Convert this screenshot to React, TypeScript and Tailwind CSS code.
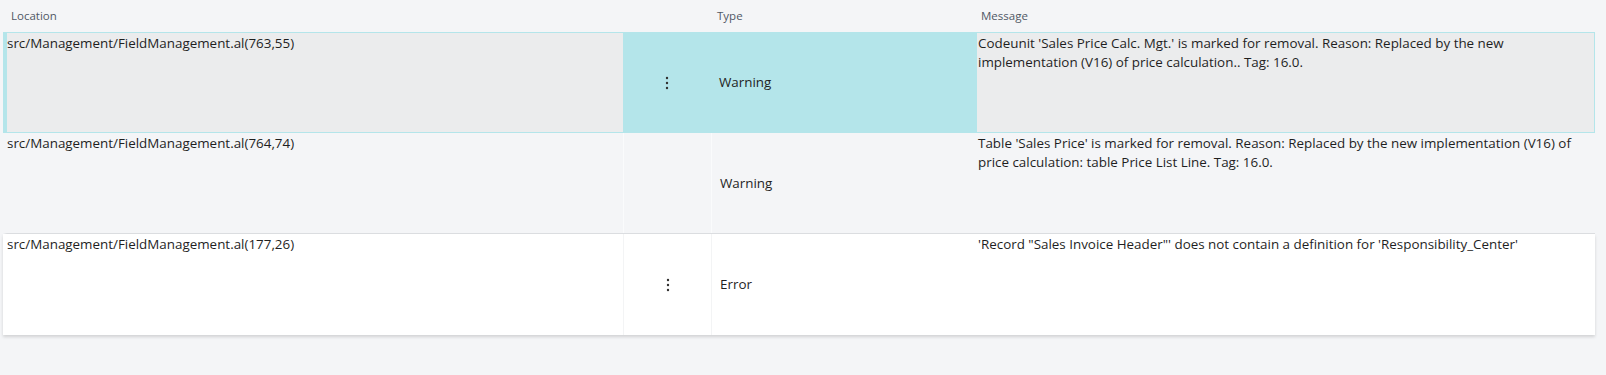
import { Fragment } from 'react'

type Row = {
  location: string
  type: string
  message: string[]
  tone: 'selected' | 'muted' | 'white'
  menu: boolean
}

const rows: Row[] = [
  {
    location: 'src/Management/FieldManagement.al(763,55)',
    type: 'Warning',
    message: [
      "Codeunit 'Sales Price Calc. Mgt.' is marked for removal. Reason: Replaced by the new",
      'implementation (V16) of price calculation.. Tag: 16.0.',
    ],
    tone: 'selected',
    menu: true,
  },
  {
    location: 'src/Management/FieldManagement.al(764,74)',
    type: 'Warning',
    message: [
      "Table 'Sales Price' is marked for removal. Reason: Replaced by the new implementation (V16) of",
      'price calculation: table Price List Line. Tag: 16.0.',
    ],
    tone: 'muted',
    menu: false,
  },
  {
    location: 'src/Management/FieldManagement.al(177,26)',
    type: 'Error',
    message: ['\'Record "Sales Invoice Header"\' does not contain a definition for \'Responsibility_Center\''],
    tone: 'white',
    menu: true,
  },
]

function MoreIcon() {
  return (
    <svg width="4" height="14" viewBox="0 0 4 14" className="text-[#323130]">
      <circle cx="2" cy="2" r="1.2" fill="currentColor" />
      <circle cx="2" cy="7" r="1.2" fill="currentColor" />
      <circle cx="2" cy="12" r="1.2" fill="currentColor" />
    </svg>
  )
}

const rowTone = {
  selected: 'border-[#b4e5ea] border-t border-r border-b bg-[#ebeced]',
  muted: 'border-l-[#f4f5f7] border-b border-b-[#dcdee1] bg-[#f4f5f7]',
  white: 'border-l-white bg-white shadow-[0_2px_3px_rgba(0,0,0,0.14)]',
}

const divider = {
  selected: 'bg-[#b4e5ea]',
  muted: 'border-l border-[#fafbfc]',
  white: 'border-l border-[#f3f4f5]',
}

export default function App() {
  return (
    <div className="min-h-[375px] w-full bg-[#f4f5f7] font-['Open_Sans','Noto_Sans',sans-serif] text-[#1f1f1f]">
      <div className="mx-[3px] w-[1592px]">
        <div className="grid h-[32px] grid-cols-[620px_88px_266px_1fr] items-center text-[11.5px] text-[#505865]">
          <span className="pl-[8px]">Location</span>
          <span />
          <span className="pl-[6px]">Type</span>
          <span className="pl-[4px]">Message</span>
        </div>
        {rows.map((row) => (
          <div
            key={row.location}
            className={`grid h-[101px] grid-cols-[616px_88px_266px_1fr] border-l-4 text-[13.4px] leading-[18.5px] ${rowTone[row.tone]}`}
          >
            <div className="pt-px">{row.location}</div>
            <div className={`flex items-center justify-center ${divider[row.tone]}`}>
              {row.menu && <MoreIcon />}
            </div>
            <div className={`flex items-center pl-[8px] ${divider[row.tone]}`}>{row.type}</div>
            <div className="pt-px pl-px">
              {row.message.map((line, i) => (
                <Fragment key={i}>
                  {i > 0 && <br />}
                  {line}
                </Fragment>
              ))}
            </div>
          </div>
        ))}
      </div>
    </div>
  )
}
